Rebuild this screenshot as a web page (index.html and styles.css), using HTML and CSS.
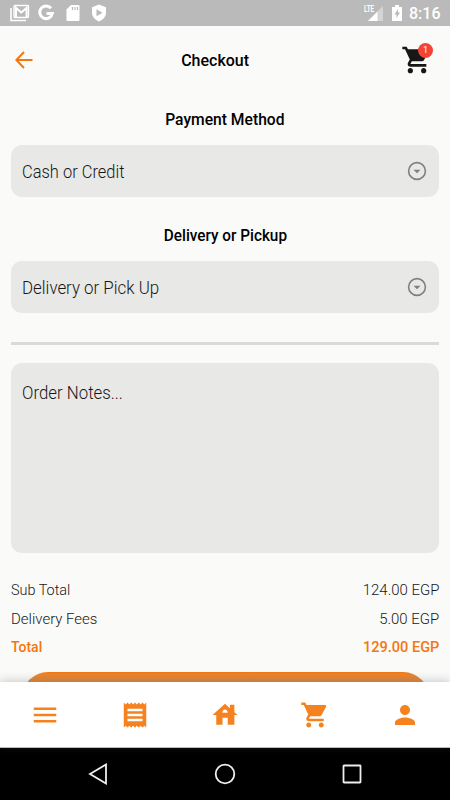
FILE: index.html
```html
<!DOCTYPE html>
<html lang="en">
<head>
<meta charset="utf-8">
<title>Checkout</title>
<link rel="stylesheet" href="styles.css">
</head>
<body>
<div class="app">
  <div class="status">
    <div class="status-left">
      <svg width="20" height="18" viewBox="0 0 20 18"><path d="M1 4v12.500h15" fill="none" stroke="#fff" stroke-width="1.600"/><rect x="4" y="1.500" width="14.500" height="12" rx="1" fill="none" stroke="#fff" stroke-width="1.400"/><path d="M6 13V4l5.300 4.500L16.600 4v9" fill="none" stroke="#fff" stroke-width="2"/></svg>
      <svg width="18" height="18" viewBox="0 0 18 18"><path d="M13 4.300A6.300 6.300 0 1 0 14.300 9.500H8.500" fill="none" stroke="#fff" stroke-width="3"/></svg>
      <svg width="14" height="18" viewBox="0 0 14 18"><path d="M5 1h7.500a1 1 0 0 1 1 1v14a1 1 0 0 1-1 1h-11a1 1 0 0 1-1-1V5.500z" fill="#fff"/><path d="M6.500 3v3M9 3v3M11.500 3v3" stroke="#bababa" stroke-width="1.200"/></svg>
      <svg width="16" height="18" viewBox="0 0 16 18"><path d="M8 .5l7 2.800v5.500c0 4-3 7-7 8.700-4-1.700-7-4.700-7-8.700V3.300z" fill="#fff"/><path d="M5.500 5.300v7l6-3.500z" fill="#bababa"/></svg>
    </div>
    <div class="status-right">
      <svg class="signal" width="15" height="15" viewBox="0 0 15 15"><path d="M15 0v15H0z" fill="#d4d4d4"/><path d="M9.500 5.500V15H0z" fill="#fff"/></svg>
      <span class="lte">LTE</span>
      <svg width="10" height="16" viewBox="0 0 10 16"><path d="M3 0h4v2h3v14H0V2h3z" fill="#fff"/><path d="M6 4L2.500 9.500h2V13L8 7.500H6z" fill="#bababa"/></svg>
      <span class="clock">8:16</span>
    </div>
  </div>
  <main class="content">
    <header class="header">
      <svg class="back" width="18" height="18" viewBox="0 0 18 18"><path d="M17.500 9H1.500M9 1L1.300 9 9 17" fill="none" stroke="#f5760a" stroke-width="2"/></svg>
      <h1 class="heading"><span class="t-title">Checkout</span></h1>
      <div class="cart">
        <svg width="32" height="32" viewBox="0 0 24 24"><path class="dark" d="M7 18c-1.100 0-1.990.9-1.990 2S5.900 22 7 22s2-.9 2-2-.9-2-2-2zM1 2v2h2l3.600 7.590-1.350 2.450C4.520 15.370 5.480 17 7 17h12v-2H7.420c-.14 0-.25-.11-.25-.25l.03-.12.900-1.630h7.450c.75 0 1.410-.41 1.750-1.030l3.580-6.490A1 1 0 0 0 20 4H5.210l-.94-2H1zm16 16c-1.100 0-1.990.9-1.990 2s.89 2 1.990 2 2-.9 2-2-.9-2-2-2z"/></svg>
        <span class="badge">1</span>
      </div>
    </header>
    <h2 class="heading payment"><span class="t-pay">Payment Method</span></h2>
    <div class="field">
      <span class="t-cash">Cash or Credit</span>
      <svg width="20" height="20" viewBox="0 0 20 20"><circle cx="10" cy="10" r="8.400" fill="none" stroke="#80807e" stroke-width="1.600"/><path d="M6.500 8.700h7L10 12.200z" fill="#80807e"/></svg>
    </div>
    <h2 class="heading delivery"><span class="t-del">Delivery or Pickup</span></h2>
    <div class="field">
      <span class="t-pick">Delivery or Pick Up</span>
      <svg width="20" height="20" viewBox="0 0 20 20"><circle cx="10" cy="10" r="8.400" fill="none" stroke="#80807e" stroke-width="1.600"/><path d="M6.500 8.700h7L10 12.200z" fill="#80807e"/></svg>
    </div>
    <div class="rule"></div>
    <div class="notes"><span class="t-notes">Order Notes...</span></div>
    <div class="totals">
      <div class="row"><span class="t-sub">Sub Total</span><span class="t-amount">124.00 EGP</span></div>
      <div class="row"><span class="t-fees">Delivery Fees</span><span class="t-amount">5.00 EGP</span></div>
      <div class="row total"><span class="t-total">Total</span><span class="t-sum">129.00 EGP</span></div>
    </div>
    <div class="submit"></div>
  </main>
  <nav class="tabs">
    <svg width="30" height="30" viewBox="0 0 24 24"><path d="M3 18h18v-2H3v2zm0-5h18v-2H3v2zm0-7v2h18V6H3z"/></svg>
    <svg width="30" height="30" viewBox="0 0 24 24"><path d="M18 17H6v-2h12v2zm0-4H6v-2h12v2zm0-4H6V7h12v2zM3 22l1.500-1.500L6 22l1.500-1.500L9 22l1.500-1.500L12 22l1.500-1.500L15 22l1.500-1.500L18 22l1.500-1.500L21 22V2l-1.500 1.500L18 2l-1.500 1.500L15 2l-1.500 1.500L12 2l-1.500 1.500L9 2 7.500 3.500 6 2 4.500 3.500 3 2v20z"/></svg>
    <svg width="30" height="30" viewBox="0 0 24 24"><path fill-rule="evenodd" d="M12 3l3.900 3.500V3.700h3.600v6L22 12h-2.500v7.800h-5.300v-5.700H10v5.700H5V12H2zM9.800 10.200h4.400c0-1.500-1-2.700-2.200-2.700s-2.200 1.200-2.200 2.700z"/></svg>
    <svg width="30" height="30" viewBox="0 0 24 24"><path d="M7 18c-1.100 0-1.990.9-1.990 2S5.900 22 7 22s2-.9 2-2-.9-2-2-2zM1 2v2h2l3.600 7.590-1.350 2.450C4.520 15.370 5.480 17 7 17h12v-2H7.420c-.14 0-.25-.11-.25-.25l.03-.12.900-1.630h7.450c.75 0 1.410-.41 1.750-1.030l3.580-6.490A1 1 0 0 0 20 4H5.210l-.94-2H1zm16 16c-1.100 0-1.990.9-1.990 2s.89 2 1.990 2 2-.9 2-2-.9-2-2-2z"/></svg>
    <svg width="30" height="30" viewBox="0 0 24 24"><path d="M12 12c2.800 0 5-2.200 5-5s-2.200-5-5-5-5 2.200-5 5 2.200 5 5 5zm0 2.500c-3.300 0-10 1.700-10 5V22h20v-2.500c0-3.300-6.700-5-10-5z" transform="translate(2.400 2.400) scale(.8)"/></svg>
  </nav>
  <div class="system">
    <svg width="22" height="22" viewBox="0 0 22 22"><path d="M19 1.500v19L3 11z"/></svg>
    <svg width="22" height="22" viewBox="0 0 22 22"><circle cx="11" cy="11" r="9.300"/></svg>
    <svg width="22" height="22" viewBox="0 0 22 22"><rect x="2.500" y="2.500" width="17" height="17" rx=".5"/></svg>
  </div>
</div>
</body>
</html>
```

FILE: styles.css
```css
* { box-sizing: border-box; }
body { margin: 0; font-family: Roboto, "Liberation Sans", sans-serif; color: #171717; }
svg { display: block; flex: none; }
.app { width: 450px; height: 800px; display: flex; flex-direction: column; background: #fafaf8; overflow: hidden; }
.status { height: 26px; flex: none; background: #bababa; display: flex; justify-content: space-between; padding: 4px 10px 0 10px; color: #fff; }
.status-left { display: flex; gap: 8px; }
.status-left svg:nth-child(3) { margin-left: 2px; }
.status-left svg:nth-child(4) { margin-left: 3px; }
.status-right { display: flex; position: relative; }
.signal { margin: 2px 9px 0 0; }
.lte { position: absolute; left: -4px; top: 1px; font-size: 9px; line-height: 8px; font-weight: 700; transform: scaleX(.7); transform-origin: left; }
.status-right svg:nth-of-type(2) { margin-top: 1px; }
.clock { width: 31px; margin-left: 7px; font-size: 16px; line-height: 20px; font-weight: 500; white-space: nowrap; }
.content { flex: 1; min-height: 0; overflow: hidden; padding: 0 11px; }
.header { height: 67px; display: flex; align-items: center; justify-content: space-between; padding: 0 6px 0 4px; }
.back { margin: 0; }
.cart { position: relative; }
.dark { fill: #171717; }
.badge { position: absolute; left: 17px; top: -1px; width: 15px; height: 15px; border-radius: 50%; background: #f44336; color: #fff; font-size: 9px; line-height: 15px; text-align: center; }
.heading { margin: 0; text-align: center; font-size: 17px; line-height: 24px; font-weight: 500; color: #000; }
.heading span, .field span, .notes span, .row span { display: inline-block; transform-origin: left center; }
.heading span { transform-origin: center; }
.header .heading { flex: 1; padding-right: 4px; }
.t-title { transform: scaleX(.94); }
.t-pay { transform: scaleX(.92); }
.t-del { transform: scaleX(.9); }
.t-cash { transform: scaleX(.915); }
.t-pick { transform: scaleX(.938); }
.t-notes { transform: scaleX(.935); }
.t-sub { transform: scaleX(.93); }
.t-fees { transform: scaleX(.966); }
.t-total { transform: scaleX(.9); }
.row .t-amount { transform: scaleX(.965); transform-origin: right center; }
.row .t-sum { transform: scaleX(.94); transform-origin: right center; }
.payment { margin-top: 14px; }
.field { height: 52px; margin-top: 14px; padding: 0 12px 0 11px; border-radius: 11px; background: #e8e8e6; display: flex; align-items: center; justify-content: space-between; font-size: 18px; font-weight: 300; }
.delivery { margin-top: 26px; }
.rule { height: 3px; margin: 29px 0 18px; background: #dadbd8; }
.notes { height: 190px; border-radius: 11px; background: #e8e8e6; padding: 18px 11px; font-size: 18px; line-height: 24px; font-weight: 300; }
.totals { margin-top: 23px; font-size: 15.500px; font-weight: 300; }
.row { height: 28.400px; display: flex; justify-content: space-between; align-items: center; }
.total { color: #f5760a; font-weight: 500; }
.submit { height: 52px; margin: 11px 10px 0 11px; border-radius: 26px; background: linear-gradient(#f5760a 0, #ee8428 2px, #dd8740 10px); }
.tabs { height: 66px; flex: none; background: #fff; border-bottom: 1px solid #bbb; display: flex; align-items: center; justify-content: space-around; position: relative; box-shadow: 0 -1px 9px rgba(80,80,100,.3); fill: #f5821f; }
.system { height: 52px; flex: none; background: #000; display: flex; align-items: center; justify-content: center; gap: 105px; fill: none; stroke: #eee; stroke-width: 1.800; }
```
